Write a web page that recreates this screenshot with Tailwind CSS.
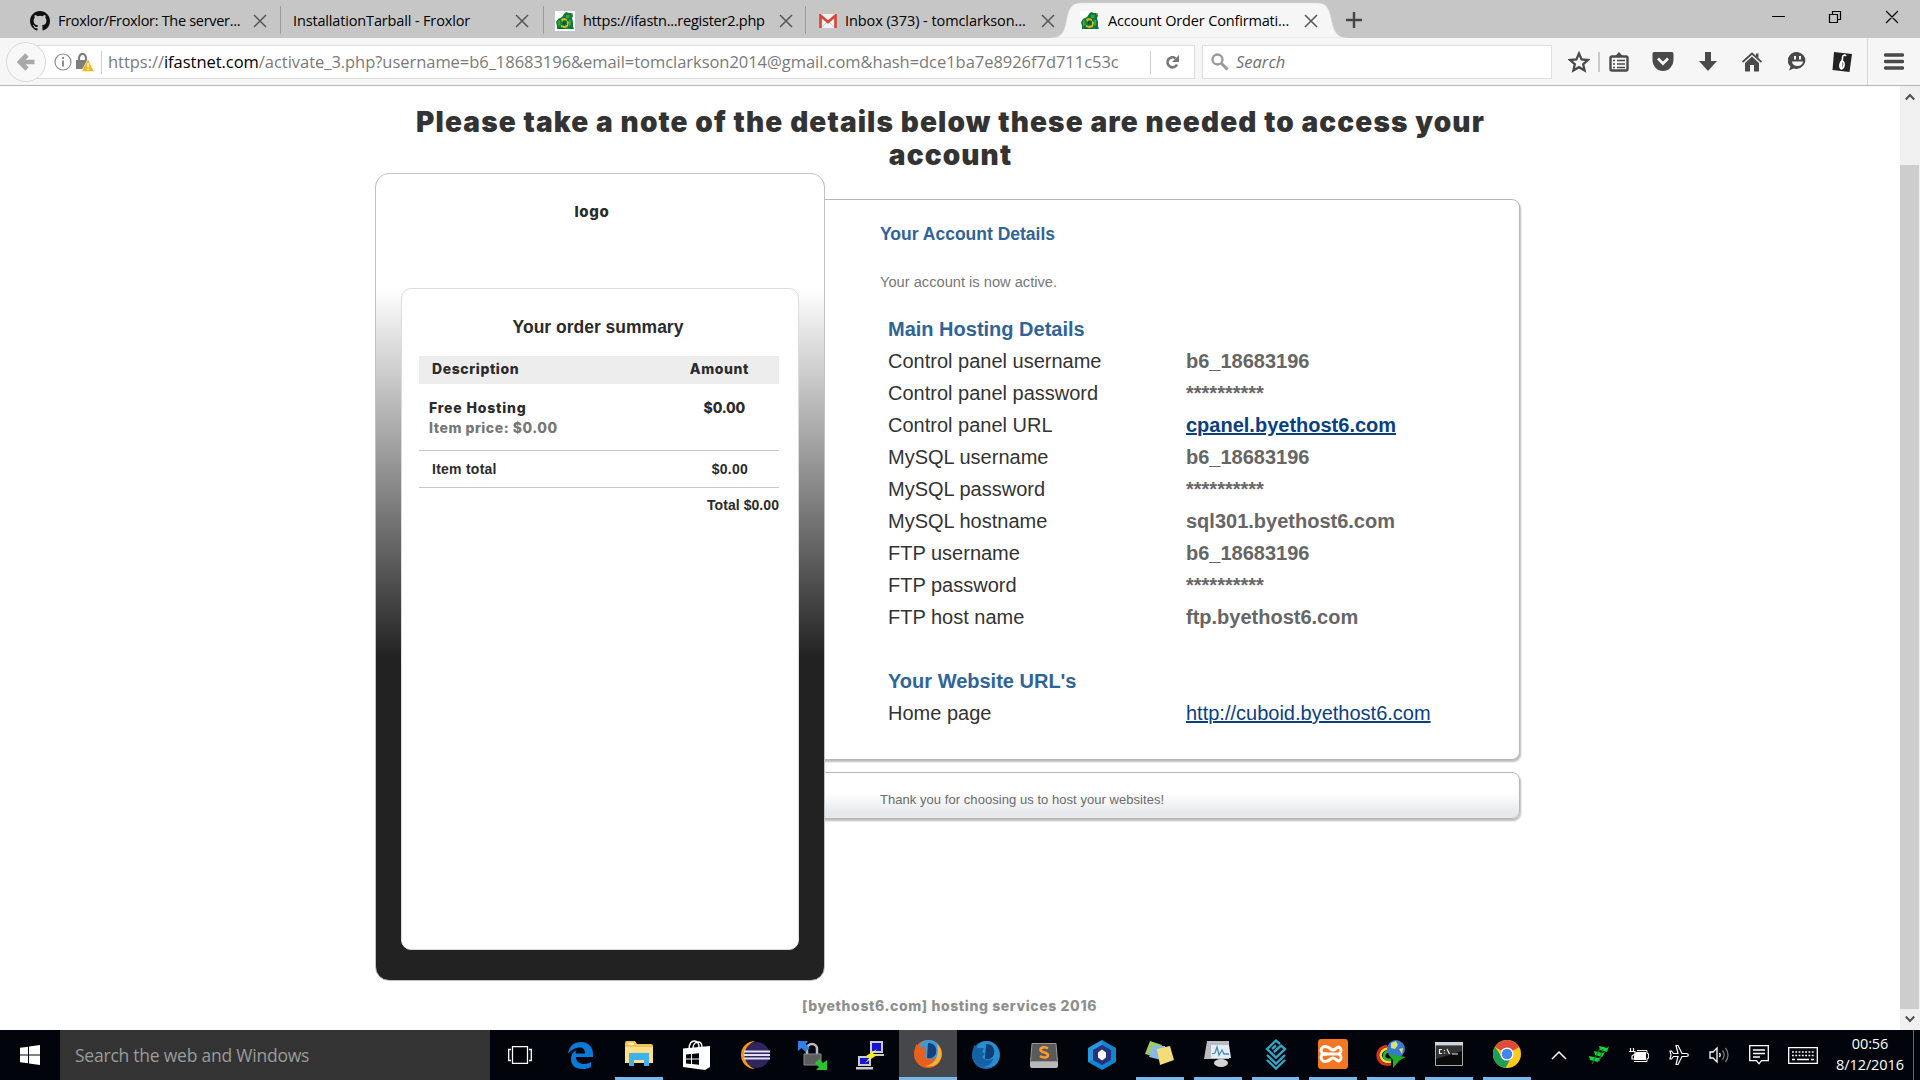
<!DOCTYPE html>
<html lang="en">
<head>
<meta charset="utf-8">
<title>Account Order Confirmation</title>
<script src="https://cdn.jsdelivr.net/npm/@tailwindcss/browser@4"></script>
</head>
<body class="w-[1920px] h-[1080px] overflow-hidden bg-white flex flex-col font-['Open_Sans',sans-serif] whitespace-nowrap">
<svg class="hidden">
  <symbol id="x" viewBox="0 0 14 14"><path d="M1 1l12 12M13 1L1 13" stroke="currentColor" stroke-width="1.5" fill="none"/></symbol>
  <symbol id="frog" viewBox="0 0 20 20"><path fill="#fff" d="M0 0h20v20H0z"/><path fill="#0c7a3c" d="M9 3l2-2 3 1 3 0 1 3-1 2 1 4 0 4 1 3H2l0-3-1-4 2-3 4-2z"/><path fill="#d9b520" d="M6 8l3-1 3 1 0 2-3-1-2 2zM6 14l3 1 3-1 1 2-3 1-4-1z"/><path fill="#3aa53a" d="M3 9l2 1 1 4-3 1zM11 4l4 0-1 3-3 0zM14 9l2 0 0 5-2 1z"/><path fill="#0a5530" d="M8 10l3 1-1 3-2-1zM5 17h3v1H4z"/><path fill="#d9c22a" d="M12 10l2 1-1 4-1 0z"/><path fill="#f28c28" d="M16 2l2 0-1 2z"/></symbol>
</svg>

<!-- tab strip -->
<header class="h-[38px] shrink-0 bg-[#c6c6c6] flex text-[14.5px] text-black relative">
  <div class="w-[280px] pl-[30px] pr-[13px] pt-[3px] flex items-center">
    <svg class="w-5 h-5 shrink-0" viewBox="0 0 16 16" fill="#111"><path d="M8 0C3.580 0 0 3.580 0 8c0 3.540 2.290 6.530 5.470 7.590.4.07.55-.17.55-.38 0-.19-.01-.82-.01-1.490-2.010.37-2.530-.49-2.690-.94-.09-.23-.48-.94-.82-1.130-.28-.15-.68-.52-.01-.53.63-.01 1.080.58 1.230.82.72 1.210 1.870.87 2.330.66.07-.52.28-.87.51-1.070-1.780-.2-3.640-.89-3.640-3.950 0-.87.31-1.590.82-2.150-.08-.2-.36-1.020.08-2.120 0 0 .67-.21 2.200.82a7.600 7.600 0 014 0c1.530-1.040 2.200-.82 2.200-.82.44 1.100.16 1.920.08 2.120.51.56.82 1.270.82 2.150 0 3.070-1.870 3.750-3.650 3.950.29.25.54.73.54 1.480 0 1.070-.01 1.930-.01 2.200 0 .21.15.46.55.38A8 8 0 0016 8c0-4.420-3.580-8-8-8z"/></svg>
    <span class="ml-[8px] tracking-[-0.31px]">Froxlor/Froxlor: The server...</span>
    <svg class="w-[14px] h-[14px] ml-auto text-[#555] shrink-0"><use href="#x"/></svg>
  </div>
  <div class="w-px h-[28px] mt-[6px] bg-[#9c9c9c]"></div>
  <div class="w-[262px] pl-[12px] pr-[14px] pt-[3px] flex items-center">
    <span class="tracking-[-0.15px]">InstallationTarball - Froxlor</span>
    <svg class="w-[14px] h-[14px] ml-auto text-[#555] shrink-0"><use href="#x"/></svg>
  </div>
  <div class="w-px h-[28px] mt-[6px] bg-[#9c9c9c]"></div>
  <div class="w-[261px] pl-[11px] pr-[12px] pt-[3px] flex items-center">
    <svg class="w-5 h-5 shrink-0"><use href="#frog"/></svg>
    <span class="ml-[8px] tracking-[-0.24px]">https://ifastn...register2.php</span>
    <svg class="w-[14px] h-[14px] ml-auto text-[#555] shrink-0"><use href="#x"/></svg>
  </div>
  <div class="w-px h-[28px] mt-[6px] bg-[#9c9c9c]"></div>
  <div class="w-[260px] -mr-[15px] pl-[13px] pr-[11px] pt-[3px] flex items-center">
    <svg class="w-[18px] h-[14px] shrink-0" viewBox="0 0 18 14"><path fill="#f1f1f1" d="M1 0h16v14H1z"/><path d="M3 13l6-6 6 6" stroke="#ccc" fill="none"/><path d="M1.500 14V1.500L9 8l7.500-6.500V14" fill="none" stroke="#d8443a" stroke-width="2.600"/></svg>
    <span class="ml-[8px] tracking-[-0.08px]">Inbox (373) - tomclarkson...</span>
    <svg class="w-[14px] h-[14px] ml-auto text-[#555] shrink-0"><use href="#x"/></svg>
  </div>
  <div class="w-[297px] h-[38px] relative">
    <svg class="absolute inset-0 w-[297px] h-[38px]" viewBox="0 0 297 38"><path fill="#f6f6f6" stroke="#dadada" stroke-width=".6" d="M0 38C14 38 14 26 16 18C18 8 21 3 30 3H266C275 3 278 8 280 18C282 26 283 38 297 38z"/></svg>
    <div class="relative flex items-center h-full pl-[29px] pr-[30px] pt-[3px]">
      <svg class="w-5 h-5 shrink-0"><use href="#frog"/></svg>
      <span class="ml-[8px] tracking-[-0.16px]">Account Order Confirmati...</span>
      <svg class="w-[14px] h-[14px] ml-auto text-[#555] shrink-0"><use href="#x"/></svg>
    </div>
  </div>
  <svg class="w-4 h-4 mt-[12px] -ml-[2px]" viewBox="0 0 16 16"><path d="M8 0v16M0 8h16" stroke="#444" stroke-width="2.400"/></svg>
  <div class="ml-auto mr-[21px] mt-[10px] flex items-start">
    <svg class="w-[128px] h-[14px]" viewBox="0 0 128 14" fill="none" stroke="#000"><path d="M1 6.500h13M58.500 4.500h8v8h-8zM61.500 4.500v-3h8v8h-3M115 1l12 12M127 1l-12 12" stroke-width="1.200"/></svg>
  </div>
</header>

<!-- navigation toolbar -->
<nav class="h-[48px] shrink-0 bg-[#f6f6f6] border-b border-[#b4b4b4] flex items-center pl-[6px] text-[16.5px]">
  <div class="relative z-10 w-10 h-10 shrink-0 rounded-full border border-[#d9d9d9] bg-[#f8f8f8] flex items-center justify-center">
    <svg class="w-[18px] h-[18px]" viewBox="0 0 18 18"><path d="M17.500 9H3M10 2L3 9l7 7" stroke="#a9a9a9" stroke-width="4.600" fill="none"/></svg>
  </div>
  <div class="-ml-[12px] w-[1161px] shrink-0 h-[34px] bg-white border border-[#dedede] flex items-center pl-[19px] pt-px text-[#7a7a7a]">
    <svg class="w-[18px] h-[18px] shrink-0" viewBox="0 0 18 18" fill="none" stroke="#8c8c8c"><circle cx="9" cy="9" r="8" stroke-width="1.200"/><path d="M9 7.500v6M9 4v2" stroke-width="2"/></svg>
    <svg class="w-[18px] h-[19px] ml-[4px] shrink-0" viewBox="0 0 18 19"><path d="M3 8V5a3.500 4 0 017 0v3" fill="none" stroke="#7d7d7d" stroke-width="2.200"/><path fill="#7d7d7d" d="M0 7h13v9H0z"/><path fill="#fdb515" stroke="#fff" stroke-width=".6" d="M12 6l6 12.500H5.500z"/><path d="M12 10v4.500M12 15.500v1.500" stroke="#fff" stroke-width="1.500"/></svg>
    <div class="w-px h-[23px] bg-[#cfcfcf] ml-[7px]"></div>
    <span class="ml-[6px] tracking-[-0.04px]">https://<span class="text-black">ifastnet.com</span>/activate_3.php?username=b6_18683196&amp;email=tomclarkson2014@gmail.com&amp;hash=dce1ba7e8926f7d711c53c</span>
    <div class="w-px h-[23px] bg-[#cfcfcf] ml-auto mr-[14px]"></div>
    <svg class="w-[15px] h-[15px] mr-[14px] shrink-0" viewBox="0 0 15 15"><path d="M12 9.500A5 5 0 1 1 10.500 3.300" fill="none" stroke="#777" stroke-width="2.600"/><path fill="#777" d="M14 0v7H7z"/></svg>
  </div>
  <div class="ml-[7px] w-[350px] shrink-0 h-[34px] bg-white border border-[#dedede] flex items-center pl-[8px] pt-px text-[#707070]">
    <svg class="w-[18px] h-[18px]" viewBox="0 0 18 18" fill="none" stroke="#999"><circle cx="6.500" cy="6.500" r="5" stroke-width="2.300"/><path d="M10.500 10.500l6 6" stroke-width="3"/></svg>
    <span class="ml-[7px] italic">Search</span>
  </div>
  <div class="flex items-center text-[#4a4a4a] flex-1">
    <svg class="w-[22px] h-[22px] ml-[16px]" viewBox="0 0 22 22"><path d="M11 2.500l2.600 5.900 6.400.6-4.800 4.200 1.400 6.300L11 16.200l-5.600 3.300 1.400-6.300L2 9l6.400-.6z" fill="none" stroke="currentColor" stroke-width="2.300"/></svg>
    <div class="w-[2px] h-[20px] bg-[#c9c9c9] ml-[8px]"></div>
    <svg class="w-[20px] h-[20px] ml-[9px]" viewBox="0 0 20 20" fill="none" stroke="currentColor"><rect x="1.500" y="4.500" width="17" height="14" rx="1.500" stroke-width="2.400"/><path fill="currentColor" stroke="none" d="M10 0l4.500 5h-9z"/><path d="M4 8.500h2M8 8.500h8M4 12h2M8 12h8M4 15.500h2M8 15.500h8" stroke-width="1.700"/></svg>
    <svg class="w-[22px] h-[19px] ml-[23px]" viewBox="0 0 22 19"><path fill="currentColor" d="M2 0h18q1.500 0 1.500 2v6a10.500 11 0 01-21 0V2Q.5 0 2 0z"/><path d="M6 6.500l5 5 5-5" stroke="#f6f6f6" stroke-width="2.800" fill="none"/></svg>
    <svg class="w-[18px] h-[20px] ml-[25px]" viewBox="0 0 18 20"><path fill="currentColor" d="M6 0h6v9h6l-9 10-9-10h6z"/></svg>
    <svg class="w-[20px] h-[20px] ml-[25px]" viewBox="0 0 20 20"><path d="M.5 10L10 1.500 19.500 10" fill="none" stroke="currentColor" stroke-width="1.800"/><path fill="currentColor" d="M10 4.500l7 6.500v8.500h-5V13H8v6.500H3V11zM14 1.500h2.500V6L14 4z"/></svg>
    <svg class="w-[19px] h-[19px] ml-[26px]" viewBox="0 0 19 19"><path fill="currentColor" d="M9.500 0a9 8.500 0 11-4 16.500L1 18.500l1.500-4A9 8.500 0 019.500 0z"/><path fill="#f6f6f6" d="M6 4h2v3.500H6zM11 4h2v3.500h-2zM4 9.500h11a5.500 4.500 0 01-11 0z"/></svg>
    <svg class="w-[20px] h-[20px] ml-[25px]" viewBox="0 0 20 20"><path fill="#222" d="M2 0l18 2-2.500 18L.5 18z"/><path d="M14 4c-1-1.500-3.500-1-3.500 1 0 1 .5 2-.5 3.500C8 11 7.500 13 8 15c.3 1.500 1 2 2 2M10.500 9c2.500 1.500 2 6-.5 8" fill="none" stroke="#fff" stroke-width="1.600"/><path d="M9.500 10v6" stroke="#fff" stroke-width="2"/></svg>
    <div class="w-px h-[46px] bg-[#d5d5d5] ml-[15px]"></div>
    <svg class="w-[20px] h-[17px] ml-[16px]" viewBox="0 0 20 17"><path d="M1.500 2h17M1.500 8.500h17M1.500 15h17" stroke="currentColor" stroke-width="3.400" stroke-linecap="round"/></svg>
  </div>
</nav>

<!-- page viewport -->
<main class="h-[944px] shrink-0 flex bg-white font-['Liberation_Sans',Arial,sans-serif] text-[#333]">
  <div class="w-[1900px] pl-[375px] flex flex-col">
    <h1 class="w-[1151px] h-[87px] pt-[20px] text-center font-['Inter',sans-serif] font-black text-[28px] leading-[32.5px] tracking-[1.12px]">Please take a note of the details below these are needed to access your<br>account</h1>
    <div class="flex h-[808px]">
      <section class="relative z-10 w-[450px] h-[808px] shrink-0 rounded-[14px] border border-[#c2c2c2] bg-[linear-gradient(180deg,#fff_114px,#222_484px)] px-[25px]">
        <div class="h-[114px] pt-[28px] -ml-[8px] w-[398px] text-center font-['Inter',sans-serif] font-extrabold text-[15px] leading-[20px] tracking-[0.7px] text-[#2b2b2b]">logo</div>
        <div class="w-[398px] h-[662px] rounded-[10px] border border-[#dcdcdc] bg-white px-[17px] text-[#2b2b2b]">
          <h2 class="pt-[26px] h-[67px] -ml-[4px] text-center font-bold text-[17.5px] leading-[24px]">Your order summary</h2>
          <div class="w-[360px] h-[28px] bg-[#ededed] flex justify-between items-center pl-[13px] pr-[30px] pb-[3px] font-['Inter',sans-serif] font-extrabold text-[14px] tracking-[0.6px]"><span>Description</span><span>Amount</span></div>
          <div class="w-[360px] h-[67px] border-b border-[#c8c8c8] pl-[10px] pr-[34px] pt-[14px] flex justify-between font-['Inter',sans-serif] font-extrabold text-[14px] leading-[20px]">
            <div><div class="tracking-[0.82px]">Free Hosting</div><div class="text-[#777] tracking-[0.52px]">Item price: $0.00</div></div>
            <div class="tracking-[-0.2px]">$0.00</div>
          </div>
          <div class="w-[360px] h-[37px] border-b border-[#c8c8c8] pl-[13px] pr-[31px] flex justify-between items-center font-bold text-[14px] tracking-[0.25px]"><span>Item total</span><span>$0.00</span></div>
          <div class="w-[360px] h-[34px] flex justify-end items-center font-bold text-[14px] tracking-[0.06px]">Total $0.00</div>
        </div>
      </section>
      <div class="-ml-[10px] pt-[26px] w-[706px]">
        <section class="h-[561px] w-[705px] rounded-[8px] border border-[#b8b8b8] shadow-[1px_2px_2px_#bbb] bg-white pl-[64px]">
          <h3 class="pt-[22px] font-bold text-[17.5px] leading-[24px] text-[#2f6499]">Your Account Details</h3>
          <p class="pt-[26px] text-[14.67px] leading-[20px] text-[#777]">Your account is now active.</p>
          <div class="pt-[21px] pl-[8px] grid grid-cols-[298px_1fr] auto-rows-[32px] items-center text-[20px]">
            <div class="col-span-2 font-bold text-[#2f6499]">Main Hosting Details</div>
            <div>Control panel username</div><div class="font-bold text-[#666]">b6_18683196</div>
            <div>Control panel password</div><div class="font-bold text-[#666]">**********</div>
            <div>Control panel URL</div><div class="font-bold text-[#0b4080] underline">cpanel.byethost6.com</div>
            <div>MySQL username</div><div class="font-bold text-[#666]">b6_18683196</div>
            <div>MySQL password</div><div class="font-bold text-[#666]">**********</div>
            <div>MySQL hostname</div><div class="font-bold text-[#666]">sql301.byethost6.com</div>
            <div>FTP username</div><div class="font-bold text-[#666]">b6_18683196</div>
            <div>FTP password</div><div class="font-bold text-[#666]">**********</div>
            <div>FTP host name</div><div class="font-bold text-[#666]">ftp.byethost6.com</div>
            <div class="col-span-2"></div>
            <div class="col-span-2 font-bold text-[#2f6499]">Your Website URL's</div>
            <div>Home page</div><div class="text-[#0b4080] underline">http://cuboid.byethost6.com</div>
          </div>
        </section>
        <section class="mt-[12px] h-[47px] w-[705px] rounded-[8px] border border-[#b8b8b8] shadow-[1px_2px_2px_#bbb] bg-[linear-gradient(180deg,#fff_20px,#e6e9ec_40px)] pl-[64px] pt-[17px] text-[13px] leading-[20px] tracking-[0.05px] text-[#6b6b6b]">Thank you for choosing us to host your websites!</section>
      </div>
    </div>
    <footer class="w-[1149px] pt-[15px] text-center font-['Inter',sans-serif] font-extrabold text-[14px] leading-[20px] tracking-[0.61px] text-[#8f8f8f]">[byethost6.com] hosting services 2016</footer>
  </div>
  <aside class="w-5 bg-[#f0f0f0] flex flex-col items-center">
    <svg class="w-[10px] h-[8px] mt-[7px] mr-px" viewBox="0 0 10 8"><path d="M.8 6.500L5 2l4.200 4.500" fill="none" stroke="#505050" stroke-width="2"/></svg>
    <div class="w-[19px] h-[844px] mt-[64px] mr-px bg-[#cdcdcd]"></div>
    <svg class="w-[10px] h-[8px] mt-[6px] mr-px" viewBox="0 0 10 8"><path d="M.8 1.500L5 6l4.200-4.500" fill="none" stroke="#505050" stroke-width="2"/></svg>
  </aside>
</main>

<!-- taskbar -->
<footer class="h-[50px] shrink-0 bg-[#01040a] flex items-center text-white">
  <div class="w-[60px] flex justify-center"><svg class="w-5 h-5" viewBox="0 0 20 20" fill="#fff"><path d="M0 2.800l8-1.100V9.500H0zM9 1.500L20 0v9.500H9zM0 10.500h8v7.800l-8-1.100zM9 10.500h11V20L9 18.500z"/></svg></div>
  <div class="w-[430px] h-[50px] bg-[#333] flex items-center pl-[15px] text-[17.5px] tracking-[-0.23px] text-[#9b9b9b]">Search the web and Windows</div>
  <div class="w-[62px] pr-[2px] flex justify-center"><svg class="w-6 h-[22px]" viewBox="0 0 24 22" fill="none" stroke="#fff" stroke-width="1.300"><path d="M4.500 2.700h15v16.600h-15zM3 5.500H.7v11H3M21 5.500h2.300v11H21"/></svg></div>
  <div class="w-[984px] h-[50px] grid grid-cols-17">
    <div class="h-[50px] flex items-center justify-center"><svg class="w-[25px] h-[27px]" viewBox="0 0 25 27"><path fill="#0a7ad8" d="M0 12C1 4 6 0 13 0c8 0 12 6 12 12v3H8c0 5 4 7 8 7 3 0 5-.7 7-2v5c-3 1.500-5 2-9 2C7 27 3 23 3 17c0-4 2-7.500 6-9-1 1.200-1.300 2-1.400 3.500H17C17 8 15.500 5.500 12 5.500 7 5.500 3 8 0 12z"/></svg></div>
    <div class="h-[50px] border-b-[3px] border-[#76b9ed] flex items-center justify-center mx-[5px]"><svg class="w-[28px] h-[25px]" viewBox="0 0 28 25"><path fill="#f0c44d" d="M0 2q0-2 2-2h8l2 3h14q2 0 2 2v17H0z"/><path fill="#fff" d="M3 2h6v1.500H3z"/><path fill="#ffe08a" d="M0 6h28v16H0z"/><path fill="#3cb3ee" d="M4 12h20v13h-5v-6h-10v6H4z"/></svg></div>
    <div class="h-[50px] flex items-center justify-center"><svg class="w-[27px] h-[30px]" viewBox="0 0 27 30"><path d="M6 10C6 3 9 1 11.500 1S16 3 16 8M10 9c0-4 2-7 5-7s4 2 4 5" fill="none" stroke="#fff" stroke-width="1.400"/><path fill="#fff" d="M0 8.500L27 6v21L22 30 0 27z"/><path fill="#01040a" d="M3 14.500l5-.5v4.500H3zM9 14l7-.7v5.200H9zM3 19.500h5V24l-5-.5zM9 19.500h7v5.300L9 24z"/></svg></div>
    <div class="h-[50px] flex items-center justify-center"><svg class="w-[30px] h-[28px]" viewBox="0 0 30 28"><path fill="#f7941e" d="M15 0A14 14 0 1015 28 15 15 0 0115 0z"/><ellipse cx="17" cy="14" rx="12.500" ry="13" fill="#2f2660"/><path d="M4 10.500h26M4 14h26M4 17.500h26" stroke="#e4dff4" stroke-width="2"/></svg></div>
    <div class="h-[50px] flex items-center justify-center"><svg class="w-[29px] h-[29px]" viewBox="0 0 29 29"><path d="M9 14V8a5 5 0 0110 0v6" fill="none" stroke="#bbb" stroke-width="2.500"/><path fill="#5c5c5c" stroke="#8a8a8a" d="M6 13h17v11H6z"/><path fill="#2f7fe8" d="M0 0h10L7.500 3l4 4-4 4-4-4L0 10z"/><path fill="#29c32d" d="M29 29H18l3-3-4-4 4-4 4 4 4-3z"/></svg></div>
    <div class="h-[50px] flex items-center justify-center"><svg class="w-[29px] h-[29px]" viewBox="0 0 29 29"><path fill="#ccc" d="M14 0h13v12H14zM16 13h12v2H14zM2 15h13v10H2zM0 26h17v2.500H0z"/><path fill="#1414d2" d="M16 2h9v8h-9zM4 17h9v6H4z"/><path fill="#f5ee1c" d="M21 8L10 15l4 1-5 6 12-8-4-1z"/></svg></div>
    <div class="h-[50px] bg-[#45474b] border-b-[3px] border-[#76b9ed] flex items-center justify-center"><svg class="w-[28px] h-[28px]" viewBox="0 0 28 28"><circle cx="14" cy="14" r="14" fill="#e8601c"/><circle cx="15" cy="11.500" r="11.500" fill="#3a9ddb"/><path fill="#14407f" d="M14 3c7 0 9 5 8 10-1 4-5 6-9 5z"/><path fill="#e8601c" d="M1 9L2 4l4 3h6l-2 4 3 2-3 3c3 4 8 4 11 1 0 5-5 8-10 7C4 23 0 17 1 9z"/><path fill="#fbb034" d="M23 4c6 5 6 14 1 19-4 4-10 4-13 3 9-1 15-9 12-22z"/></svg></div>
    <div class="h-[50px] flex items-center justify-center"><svg class="w-[28px] h-[28px]" viewBox="0 0 28 28"><circle cx="14" cy="14" r="14" fill="#1567ad"/><circle cx="15" cy="11.500" r="11.500" fill="#2a8fd0"/><path fill="#103e78" d="M14 3c7 0 9 5 8 10-1 4-5 6-9 5z"/><path fill="#1561a5" d="M1 9L2 4l4 3h6l-2 4 3 2-3 3c3 4 8 4 11 1 0 5-5 8-10 7C4 23 0 17 1 9z"/><path fill="#278fd1" d="M23 4c6 5 6 14 1 19-4 4-10 4-13 3 9-1 15-9 12-22z"/></svg></div>
    <div class="h-[50px] flex items-center justify-center"><svg class="w-[28px] h-[25px]" viewBox="0 0 28 25"><path fill="#5a5a5a" stroke="#999" d="M2 .5h24l1.500 18h-27z"/><path fill="#b8b8b8" d="M0 19h28v4q0 2-2 2H2q-2 0-2-2z"/><path d="M18 5.500c-3-2-7.500-1.500-7.500 1.300 0 3.200 7.500 2 7.500 5.200 0 3-5 3.200-8 1" fill="none" stroke="#ff9a2e" stroke-width="2.600"/></svg></div>
    <div class="h-[50px] flex items-center justify-center"><svg class="w-[28px] h-[30px]" viewBox="0 0 28 30"><path fill="#0f86d0" d="M14 0l14 8v14l-14 8L0 22V8z"/><path fill="#46a6e6" d="M0 8l6 2.500v9L0 22zM14 0v6L6 10.500 0 8z" opacity=".5"/><path fill="#26327c" d="M14 5l9 5v10l-9 5-9-5V10z"/><path fill="#fff" d="M14 9.500l4 3v5l-4 3-4-3v-5z"/></svg></div>
    <div class="h-[50px] border-b-[3px] border-[#76b9ed] flex items-center justify-center mx-[5px]"><svg class="w-[29px] h-[25px]" viewBox="0 0 29 25"><path fill="#9dc96d" d="M5 0l12 4-6 12L0 13z"/><path fill="#87b9e4" d="M8 5h12v15L4 16z"/><path fill="#f4dd79" d="M12 8l13-3 4 14-14 5z"/></svg></div>
    <div class="h-[50px] border-b-[3px] border-[#76b9ed] flex items-center justify-center mx-[5px]"><svg class="w-[28px] h-[26px]" viewBox="0 0 28 26"><path fill="#b9bcc0" d="M3 0h22v18H0z"/><path fill="#e4edf5" d="M7 4h18l2 13H7z"/><path d="M8 13l3-1 2-6 2 8 3-5 2 4h5" fill="none" stroke="#4c89b8" stroke-width="1.300"/><ellipse cx="17" cy="22" rx="7" ry="4" fill="#d5d5d5"/></svg></div>
    <div class="h-[50px] border-b-[3px] border-[#76b9ed] flex items-center justify-center mx-[5px]"><svg class="w-[22px] h-[32px]" viewBox="0 0 22 32" fill="none" stroke="#30a9c9" stroke-width="2.400"><path d="M15 6L11 2.500 2 11l9 8.500 9-8.500-4-3.500-7 6.500M7 11l4-3.500M2 17l9 8.500 9-8.500M2 22l9 8.500 9-8.500"/></svg></div>
    <div class="h-[50px] border-b-[3px] border-[#76b9ed] flex items-center justify-center mx-[5px]"><svg class="w-[30px] h-[30px]" viewBox="0 0 30 30"><rect width="30" height="30" rx="3" fill="#f37623"/><path d="M12 15H9a4 4 0 110-7c2.500 0 3.500 3 6 3s3.500-3 6-3a4 4 0 010 7h-3M12 15H9a4 4 0 100 7c2.500 0 3.500-3 6-3s3.500 3 6 3a4 4 0 000-7h-3M12 15h6" fill="none" stroke="#fff" stroke-width="3"/></svg></div>
    <div class="h-[50px] border-b-[3px] border-[#76b9ed] flex items-center justify-center mx-[5px]"><svg class="w-[30px] h-[28px]" viewBox="0 0 30 28"><path d="M11 6C2 7 0 15 3 20c3 5 8 5 12 4" fill="none" stroke="#e12d22" stroke-width="2.600"/><path d="M12 8.500C5 9.500 3 15 6 19c2 3 6 3 9 2.500" fill="none" stroke="#f5e02a" stroke-width="2.600"/><path d="M13 11c-5 1-6 5-4 7.500 1.500 1.500 4 1.500 6 1" fill="none" stroke="#2db83d" stroke-width="2.600"/><circle cx="20" cy="9" r="9" fill="#3b79cc"/><path fill="#d5e17c" d="M15 3l5-2 2 4-3 4-4-1zM23 9l4-1-1 6z"/><path fill="#1eae25" d="M12 14l18 3-6 3-7 8 0-8z"/></svg></div>
    <div class="h-[50px] border-b-[3px] border-[#76b9ed] flex items-center justify-center mx-[5px]"><svg class="w-[28px] h-[24px]" viewBox="0 0 28 24"><path fill="#0a0a0a" stroke="#a8a8a8" d="M.5.5h27v23H.5z"/><path fill="#cfd4da" d="M0 0h28v3.500H0z"/><path fill="#333" d="M1 4h26v5L1 17z"/><path d="M7 7.500H4.500v4H7M9.500 8v1M9.500 10.500v1M12 7l2.500 5M17 12h6" stroke="#eee" stroke-width="1.200" fill="none"/></svg></div>
    <div class="h-[50px] border-b-[3px] border-[#76b9ed] flex items-center justify-center mx-[5px]"><svg class="w-[28px] h-[28px]" viewBox="0 0 28 28"><circle cx="14" cy="14" r="14" fill="#fbc91b"/><path fill="#de4a3c" d="M14 14L2 7a14 14 0 0124.200 0z"/><path fill="#1e9e57" d="M1.900 7A14 14 0 0012.500 28L18 18l-9-1z"/><circle cx="14" cy="14" r="6.600" fill="#fff"/><circle cx="14" cy="14" r="5.300" fill="#4286f3"/></svg></div>
  </div>
  <div class="flex-1 flex items-center pl-[15px]">
    <svg class="w-4 h-[10px]" viewBox="0 0 16 10"><path d="M1 9l7-7 7 7" stroke="#fff" stroke-width="1.500" fill="none"/></svg>
    <svg class="w-[20px] h-[20px] ml-[22px]" viewBox="0 0 20 20"><path fill="#15d63b" d="M10 1l8 2 2-2-2 6-7-2zM5 6l8 2 3-1-3 5-7-2zM0 11l9 2 3-1-3 5-8-2z"/><path d="M11 3L3 19M14 4l-4 12" stroke="#0a7d20" stroke-width="1.200"/></svg>
    <svg class="w-[20px] h-[14px] ml-[20px]" viewBox="0 0 20 14"><path d="M1.500 0v3M4.500 0v3M0 3.500h6V6l-3 2v3h2" fill="none" stroke="#fff" stroke-width="1.200"/><path fill="#fff" d="M7 4h10v8H5V8z"/><path d="M8 2.600h10v2.900h1.400v5H18v3H5" fill="none" stroke="#fff"/></svg>
    <svg class="w-[20px] h-[20px] ml-[20px]" viewBox="0 0 20 20"><path d="M19.300 10c0 1-.9 1.500-2 1.500H13l-4 8H7l2-8H4.500l-2 2.500H1l1-4-1-4h1.500l2 2.500H9L7 .5h2l4 8h4.300c1.100 0 2 .5 2 1.500z" fill="none" stroke="#fff" stroke-width="1.200"/></svg>
    <svg class="w-[21px] h-[18px] ml-[20px]" viewBox="0 0 21 18" fill="none" stroke="#fff" stroke-width="1.300"><path d="M1 6h3l4-4v14l-4-4H1zM10.500 7q1.500 2 0 4"/><path d="M13.500 4.500q3.500 4.500 0 9M16.500 2q5 7 0 14" stroke="#777"/></svg>
    <svg class="w-[20px] h-[20px] ml-[19px]" viewBox="0 0 20 20" fill="none" stroke="#fff" stroke-width="1.300"><path d="M.7.7h18.600v15H12.500L10 18.800 7.500 15.700H.7zM4 5h12M4 8.500h12M4 12h7"/></svg>
    <svg class="w-[30px] h-[17px] ml-[19px]" viewBox="0 0 30 17" fill="none" stroke="#fff"><path d="M.7.7h28.600v15.600H.7z" stroke-width="1.300"/><path d="M4 5h22M4 8.500h22" stroke-width="1.500" stroke-dasharray="1.800 1.500"/><path d="M4 12.500h3M9 12.500h12M23 12.500h3" stroke-width="1.400"/></svg>
    <div class="ml-[17px] mt-[-3px] w-[70px] text-center text-[14.5px] leading-[21px] tracking-[-0.1px]"><div>00:56</div><div>8/12/2016</div></div>
    <div class="ml-[8px] w-px h-[50px] bg-[#666]"></div>
  </div>
</footer>
</body>
</html>
